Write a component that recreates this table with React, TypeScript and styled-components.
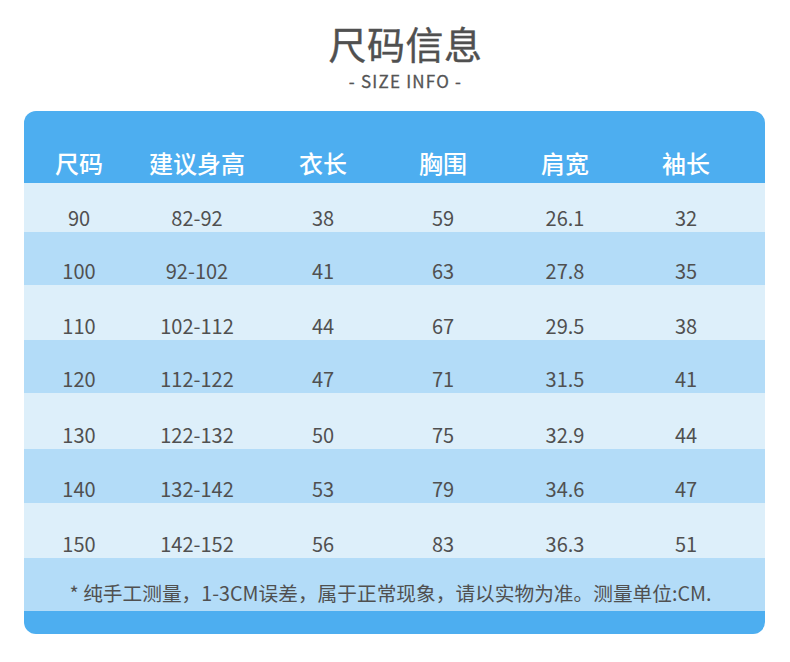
import React from "react";
import styled, { createGlobalStyle } from "styled-components";

const GlobalStyle = createGlobalStyle`
  html, body {
    margin: 0;
    padding: 0;
    background: #ffffff;
  }
  body {
    font-family: "Noto Sans CJK SC", "Noto Sans", sans-serif;
  }
`;

const Page = styled.div`
  width: 790px;
  height: 662px;
  display: flex;
  flex-direction: column;
  align-items: center;
  box-sizing: border-box;
  padding-top: 15px;
`;

const Heading = styled.div`
  display: flex;
  flex-direction: column;
  align-items: center;
  margin-left: 21px;
`;

const Title = styled.h1`
  margin: 0;
  font-size: 38px;
  line-height: 56px;
  font-weight: 400;
  color: #505050;
  letter-spacing: 0.5px;
  -webkit-text-stroke: 0.4px #505050;
`;

const Subtitle = styled.div`
  font-family: "Noto Sans CJK SC", "Noto Sans", sans-serif;
  font-size: 17px;
  line-height: 19px;
  color: #555555;
  letter-spacing: 1.2px;
  -webkit-text-stroke: 0.3px #555555;
`;

const Table = styled.div`
  margin-top: 21px;
  width: 741px;
  margin-left: -1px;
  border-radius: 12px;
  overflow: hidden;
  display: flex;
  flex-direction: column;
`;

const Row = styled.div<{ $bg: string; $h: number; $pad: number }>`
  display: grid;
  grid-template-columns: 110px 126px 126px 114px 130px 112px 1fr;
  align-items: end;
  height: ${(p) => p.$h}px;
  box-sizing: border-box;
  padding-bottom: ${(p) => p.$pad}px;
  background: ${(p) => p.$bg};
`;

const HeadCell = styled.div`
  text-align: center;
  font-size: 24px;
  line-height: 30px;
  color: #ffffff;
  font-weight: 500;
`;

const Cell = styled.div`
  text-align: center;
  font-size: 20px;
  line-height: 24px;
  color: #505050;
`;

const Footer = styled.div`
  height: 53px;
  background: #b3dcf8;
  display: flex;
  align-items: flex-end;
  justify-content: center;
  box-sizing: border-box;
  padding-bottom: 5px;
  padding-right: 8px;
  font-size: 19.7px;
  line-height: 26px;
  color: #505050;
`;

const BottomBar = styled.div`
  height: 23px;
  background: #4daef0;
`;

const headers = ["尺码", "建议身高", "衣长", "胸围", "肩宽", "袖长"];

const rows: { v: string[]; h: number }[] = [
  { v: ["90", "82-92", "38", "59", "26.1", "32"], h: 49 },
  { v: ["100", "92-102", "41", "63", "27.8", "35"], h: 53 },
  { v: ["110", "102-112", "44", "67", "29.5", "38"], h: 55 },
  { v: ["120", "112-122", "47", "71", "31.5", "41"], h: 53 },
  { v: ["130", "122-132", "50", "75", "32.9", "44"], h: 56 },
  { v: ["140", "132-142", "53", "79", "34.6", "47"], h: 54 },
  { v: ["150", "142-152", "56", "83", "36.3", "51"], h: 55 },
];

export default function App() {
  return (
    <>
      <GlobalStyle />
      <Page>
        <Heading>
          <Title>尺码信息</Title>
          <Subtitle>- SIZE INFO -</Subtitle>
        </Heading>
        <Table>
          <Row $bg="#4daef0" $h={72} $pad={5}>
            {headers.map((h) => (
              <HeadCell key={h}>{h}</HeadCell>
            ))}
          </Row>
          {rows.map((r, i) => (
            <Row key={r.v[0]} $bg={i % 2 === 0 ? "#ddeffa" : "#b3dcf8"} $h={r.h} $pad={2}>
              {r.v.map((c, j) => (
                <Cell key={j}>{c}</Cell>
              ))}
            </Row>
          ))}
          <Footer>* 纯手工测量，1-3CM误差，属于正常现象，请以实物为准。测量单位:CM.</Footer>
          <BottomBar />
        </Table>
      </Page>
    </>
  );
}
